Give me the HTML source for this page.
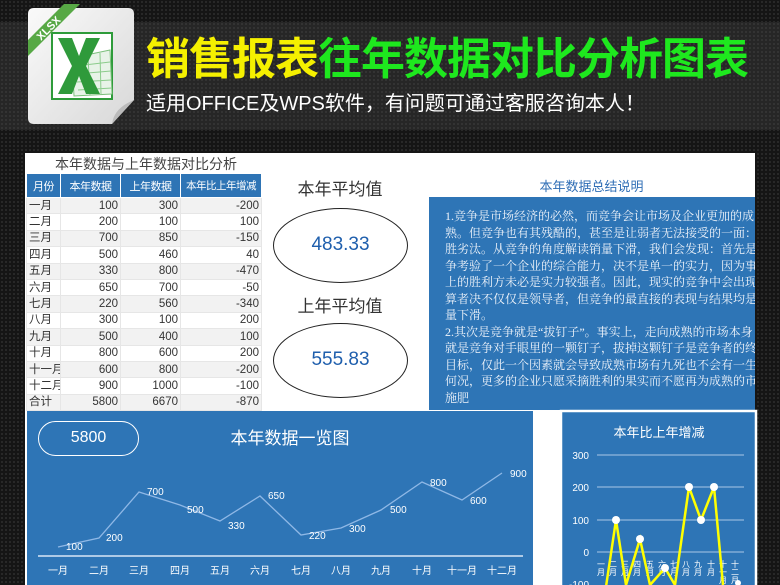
<!DOCTYPE html>
<html><head><meta charset="utf-8"><style>
*{margin:0;padding:0;box-sizing:border-box}
html,body{overflow:hidden}
body{width:780px;height:585px;background:#151515;position:relative;font-family:"Liberation Sans","Noto Sans CJK SC",sans-serif;
background-image:radial-gradient(#2a2a2a 1px,transparent 1.2px);background-size:4px 4px}
svg{overflow:hidden}
.a{position:absolute}
.band{left:0;top:22px;width:780px;height:108px;background:#262626;background-image:radial-gradient(#343434 1px,transparent 1.2px);background-size:4px 4px}
.t1{left:146px;top:34px;font-size:44px;font-weight:bold;color:#f5f000;letter-spacing:-1px;white-space:nowrap;line-height:52px}
.t1 span{color:#1ee81e}
.t2{left:146px;top:92px;font-size:20px;color:#fff;white-space:nowrap;line-height:24px}
.panel{left:25px;top:153px;width:730px;height:432px;background:#fff}
table{border-collapse:collapse;font-size:11.5px;color:#333;table-layout:fixed}
td{height:16.4px;border:1px solid #e6e6e6;padding:0 2px;text-align:right;line-height:14px;white-space:nowrap;overflow:hidden}
td:first-child{text-align:left}
tr:nth-child(even) td{background:#f2f2f2}
th{background:#2e74b5;color:#fff;font-weight:normal;height:24px;font-size:11px;border:1px solid #fff;white-space:nowrap;overflow:hidden;padding:0;letter-spacing:-0.5px}
.blue{background:#2e75b6}
</style></head><body>
<div class="a band"></div>
<svg class="a" style="left:24px;top:4px" width="114" height="124" viewBox="0 0 114 124">
<defs><linearGradient id="g" x1="0" y1="0" x2="1" y2="1"><stop offset="0" stop-color="#fafafa"/><stop offset="1" stop-color="#d8d8d8"/></linearGradient></defs>
<path d="M6 4 H104 Q110 4 110 10 V96 L88 120 H10 Q4 120 4 114 V10 Q4 4 10 4Z" fill="url(#g)"/>
<path d="M110 96 L88 120 Q90 104 110 96Z" fill="#bbb"/>
<rect x="28" y="29" width="60" height="66" fill="#fff" stroke="#2e9b3a" stroke-width="2"/>
<path d="M48 54 L86 46 L88 90 L50 92Z" fill="#e8f3e8" stroke="#7cc07c"/>
<path d="M52 62 L86 58 M52 70 L87 67 M53 78 L87 76 M54 86 L88 84 M64 52 L66 91 M76 49 L77 90" stroke="#8ccc8c" stroke-width="1"/>
<path d="M34 34 H48 L55 52 L62 34 H76 L62 62 L76 90 H62 L55 72 L48 90 H34 L48 62Z" fill="#2f9a3b"/>
<path d="M4 36 L40 0 H56 L4 52Z" fill="#57a845"/>
<text x="0" y="0" transform="translate(17 37) rotate(-45)" font-size="11" font-weight="bold" fill="#fff" font-family="Liberation Sans">XLSX</text>
</svg>
<div class="a t1">销售报表<span>往年数据对比分析图表</span></div>
<div class="a t2">适用OFFICE及WPS软件，有问题可通过客服咨询本人！</div>
<div class="a panel"></div>
<div class="a" style="left:55px;top:154px;font-size:14px;color:#444;white-space:nowrap">本年数据与上年数据对比分析</div>
<table class="a" style="left:26px;top:173px;width:235px">
<colgroup><col style="width:34px"><col style="width:60px"><col style="width:60px"><col style="width:81px"></colgroup>
<tr><th>月份</th><th>本年数据</th><th>上年数据</th><th style="font-size:10.5px">本年比上年增减</th></tr>
<tr><td>一月</td><td>100</td><td>300</td><td>-200</td></tr>
<tr><td>二月</td><td>200</td><td>100</td><td>100</td></tr>
<tr><td>三月</td><td>700</td><td>850</td><td>-150</td></tr>
<tr><td>四月</td><td>500</td><td>460</td><td>40</td></tr>
<tr><td>五月</td><td>330</td><td>800</td><td>-470</td></tr>
<tr><td>六月</td><td>650</td><td>700</td><td>-50</td></tr>
<tr><td>七月</td><td>220</td><td>560</td><td>-340</td></tr>
<tr><td>八月</td><td>300</td><td>100</td><td>200</td></tr>
<tr><td>九月</td><td>500</td><td>400</td><td>100</td></tr>
<tr><td>十月</td><td>800</td><td>600</td><td>200</td></tr>
<tr><td>十一月</td><td>600</td><td>800</td><td>-200</td></tr>
<tr><td>十二月</td><td>900</td><td>1000</td><td>-100</td></tr>
<tr><td>合计</td><td>5800</td><td>6670</td><td>-870</td></tr>
</table>
<div class="a" style="left:280px;top:175px;width:120px;text-align:center;font-size:17px;color:#333;white-space:nowrap">本年平均值</div>
<div class="a" style="left:273px;top:208px;width:135px;height:75px;border:1.5px solid #222;border-radius:50%;text-align:center;line-height:72px;font-size:19px;color:#1f5fad">483.33</div>
<div class="a" style="left:280px;top:292px;width:120px;text-align:center;font-size:17px;color:#333;white-space:nowrap">上年平均值</div>
<div class="a" style="left:273px;top:323px;width:135px;height:75px;border:1.5px solid #222;border-radius:50%;text-align:center;line-height:72px;font-size:19px;color:#1f5fad">555.83</div>
<div class="a" style="left:429px;top:176px;width:325px;text-align:center;font-size:13px;color:#2e6db5">本年数据总结说明</div>
<div class="a blue" style="left:429px;top:197px;width:326px;height:213px;overflow:hidden">
<div style="padding:11px 0 0 16px;width:340px;font-family:'Liberation Serif','Noto Serif CJK SC',serif;font-size:12px;line-height:16.5px;color:#eef3fa;white-space:nowrap">
1.竞争是市场经济的必然，而竞争会让市场及企业更加的成<br>熟。但竞争也有其残酷的，甚至是让弱者无法接受的一面：优<br>胜劣汰。从竞争的角度解读销量下滑，我们会发现：首先是竞<br>争考验了一个企业的综合能力，决不是单一的实力，因为事实<br>上的胜利方未必是实力较强者。因此，现实的竞争中会出现胜<br>算者决不仅仅是领导者，但竞争的最直接的表现与结果均是销<br>量下滑。<br>2.其次是竞争就是“拔钉子”。事实上，走向成熟的市场本身<br>就是竞争对手眼里的一颗钉子，拔掉这颗钉子是竞争者的终极<br>目标，仅此一个因素就会导致成熟市场有九死也不会有一生。<br>何况，更多的企业只愿采摘胜利的果实而不愿再为成熟的市场<br>施肥</div></div>
<div class="a blue" style="left:27px;top:411px;width:506px;height:174px"></div>
<div class="a" style="left:38px;top:421px;width:101px;height:35px;border:1.5px solid #fff;border-radius:18px;color:#fff;font-size:16px;text-align:center;line-height:32px">5800</div>
<div class="a" style="left:200px;top:424px;width:180px;text-align:center;color:#fff;font-size:17px">本年数据一览图</div>
<svg class="a" style="left:0;top:0" width="780" height="585">
<line x1="38" y1="556" x2="523" y2="556" stroke="#d8e6f5" stroke-width="1.5"/>
<polyline fill="none" stroke="#8fb8e6" stroke-width="1.3" points="58,547 99,538 139,492 180,505 220,521 260,496 301,535 341,528 381,510 422,482 462,500 502,473"/>
<g fill="#fff" font-size="10" font-family="Liberation Sans">
<text x="66" y="550">100</text><text x="106" y="541">200</text><text x="147" y="495">700</text><text x="187" y="513">500</text><text x="228" y="529">330</text><text x="268" y="499">650</text><text x="309" y="539">220</text><text x="349" y="532">300</text><text x="390" y="513">500</text><text x="430" y="486">800</text><text x="470" y="504">600</text><text x="510" y="477">900</text>
</g>
<g fill="#fff" font-size="10" text-anchor="middle">
<text x="58" y="574">一月</text><text x="99" y="574">二月</text><text x="139" y="574">三月</text><text x="180" y="574">四月</text><text x="220" y="574">五月</text><text x="260" y="574">六月</text><text x="301" y="574">七月</text><text x="341" y="574">八月</text><text x="381" y="574">九月</text><text x="422" y="574">十月</text><text x="462" y="574">十一月</text><text x="502" y="574">十二月</text>
</g>
<rect x="561" y="411" width="195" height="176" fill="#2e75b6" stroke="#fff" stroke-width="2.5"/>
<text x="659" y="437" fill="#fff" font-size="13" text-anchor="middle">本年比上年增减</text>
<g stroke="#a9c6e6" stroke-width="1"><line x1="597" y1="455" x2="744" y2="455"/><line x1="597" y1="487" x2="744" y2="487"/><line x1="597" y1="520" x2="744" y2="520"/><line x1="597" y1="552" x2="744" y2="552"/></g>
<g fill="#fff" font-size="10" text-anchor="end"><text x="589" y="459">300</text><text x="589" y="491">200</text><text x="589" y="524">100</text><text x="589" y="556">0</text><text x="589" y="588">-100</text></g>
<g fill="#fff" font-size="8">
<text x="601" y="560" writing-mode="tb">一月</text><text x="613" y="560" writing-mode="tb">二月</text><text x="625" y="560" writing-mode="tb">三月</text><text x="637" y="560" writing-mode="tb">四月</text><text x="650" y="560" writing-mode="tb">五月</text><text x="662" y="560" writing-mode="tb">六月</text><text x="674" y="560" writing-mode="tb">七月</text><text x="686" y="560" writing-mode="tb">八月</text><text x="698" y="560" writing-mode="tb">九月</text><text x="711" y="560" writing-mode="tb">十月</text><text x="723" y="560" writing-mode="tb">十一月</text><text x="735" y="560" writing-mode="tb">十二月</text>
</g>
<polyline fill="none" stroke="#ffff00" stroke-width="2.5" points="604,600 616,520 626,585 640,539 650,585 665,568 675,585 689,487 701,520 714,487 723,585"/>
<g fill="#fff"><circle cx="616" cy="520" r="4"/><circle cx="640" cy="539" r="4"/><circle cx="665" cy="568" r="4"/><circle cx="689" cy="487" r="4"/><circle cx="701" cy="520" r="4"/><circle cx="714" cy="487" r="4"/><circle cx="738" cy="583" r="3"/></g>
</svg>
</body></html>
